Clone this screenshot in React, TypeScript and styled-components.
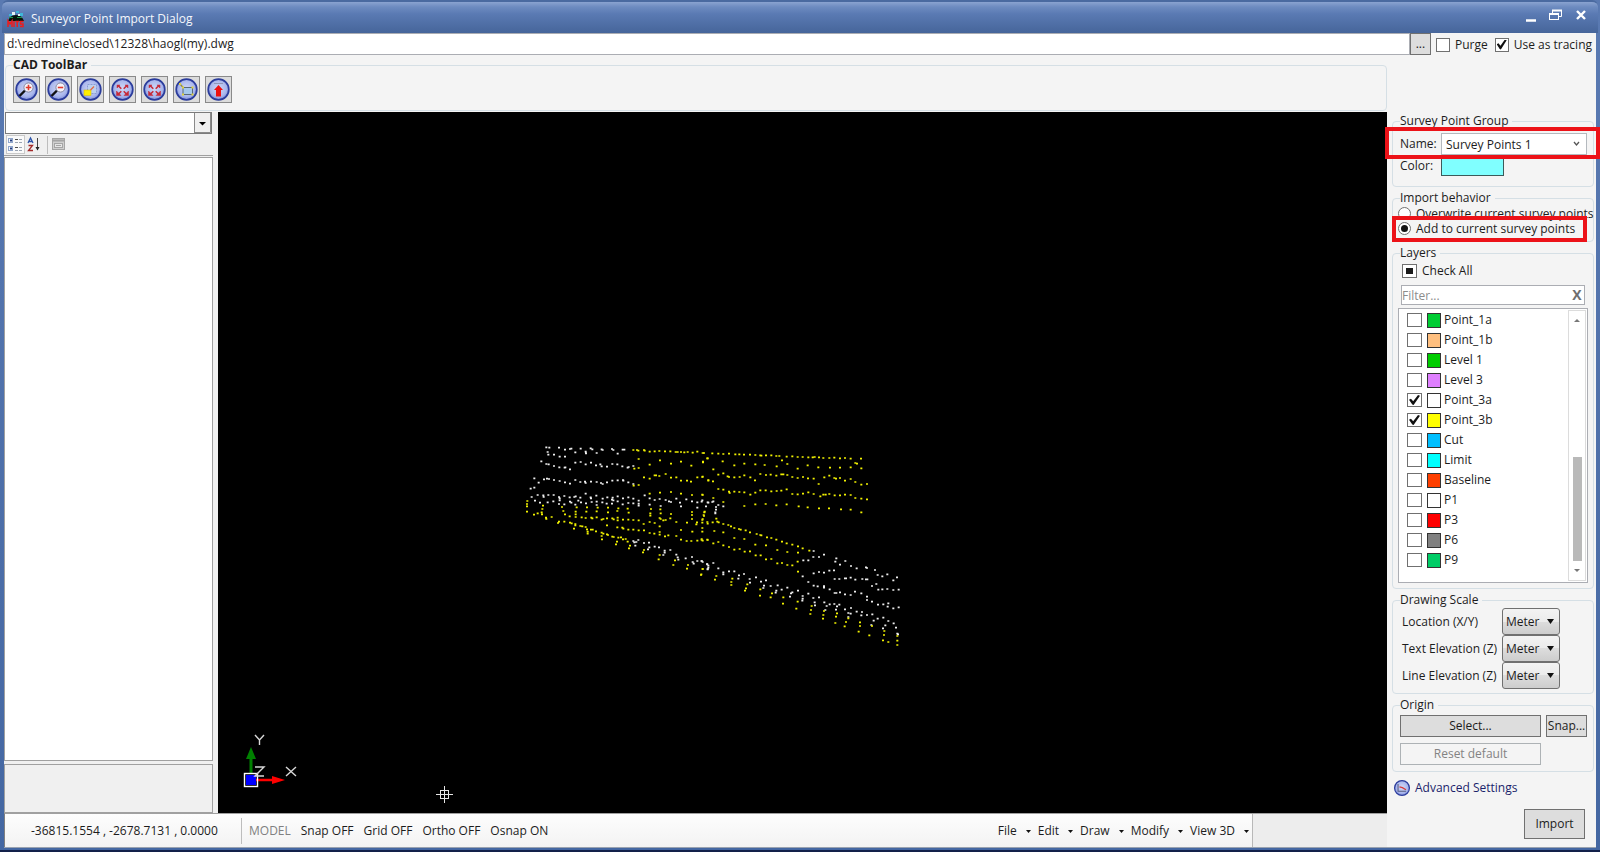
import React, { useEffect, useRef } from "react";
import styled, { createGlobalStyle, css } from "styled-components";

const font = '"Open Sans", "Noto Sans", sans-serif';

const GlobalStyle = createGlobalStyle`
  *, *::before, *::after { box-sizing: border-box; }
  body { margin: 0; font-family: ${font}; font-size: 12px; line-height: 16px; color: #1c1c1c; }
  button, input, select { font: inherit; color: inherit; margin: 0; }
`;

/* ---------- window frame ---------- */

const Window = styled.div`
  display: flex;
  flex-direction: column;
  min-height: 100vh;
  padding: 0 4px 4px;
  background: linear-gradient(to top, #12204a 2px, #4467a2 2px, #5a7ab2 100%);
`;

const TitleBar = styled.header`
  display: flex;
  align-items: center;
  gap: 6px;
  height: 33px;
  margin: 0 -2px;
  padding: 2px 8px 0 5px;
  border-top: 2px solid #4a6aa0;
  border-radius: 6px 6px 0 0;
  background: linear-gradient(#8aa3d0 0, #6d8bc0 5px, #5a7ab3 12px, #46659a 100%);
  color: #f4f7fc;
`;

const Title = styled.h1`
  flex: 1;
  margin: 0;
  font-size: 12px;
  font-weight: 400;
  line-height: 16px;
`;

const CaptionButton = styled.button`
  display: flex;
  width: 19px;
  height: 20px;
  padding: 0;
  border: 0;
  background: none;
  justify-content: center;
  align-items: flex-start;
`;

const Body = styled.main`
  flex: 1;
  display: flex;
  flex-direction: column;
  background: #f4f4f4;
  border-bottom: 1px solid #9aa3b0;
`;

/* ---------- shared controls ---------- */

const PushButton = styled.button<{ $w?: number; $h?: number }>`
  ${(p) => (p.$w ? `width: ${p.$w}px;` : "")}
  height: ${(p) => p.$h ?? 22}px;
  padding: 0;
  border: 1px solid #707070;
  background: #dddddd;
  white-space: nowrap;
  &:disabled {
    border-color: #adb2b5;
    background: #f4f4f4;
    color: #838383;
  }
`;

const CheckInput = styled.input.attrs({ type: "checkbox" })`
  appearance: none;
  position: relative;
  flex: none;
  width: 14px;
  height: 14px;
  border: 1px solid #707070;
  background: #fff;
  &:checked::after {
    content: "";
    position: absolute;
    inset: 1px;
    background: #111;
    clip-path: polygon(0 48%, 18% 38%, 38% 62%, 82% 0, 100% 8%, 42% 100%, 30% 96%);
  }
  &:indeterminate::after {
    content: "";
    position: absolute;
    inset: 3px;
    background: #1a1a1a;
  }
`;

const RadioInput = styled.input.attrs({ type: "radio" })`
  appearance: none;
  display: grid;
  place-items: center;
  flex: none;
  width: 13px;
  height: 13px;
  border: 1px solid #707070;
  border-radius: 50%;
  background: #fff;
  &:checked::after {
    content: "";
    width: 7px;
    height: 7px;
    border-radius: 50%;
    background: #111;
  }
`;

const CheckLabel = styled.label`
  display: flex;
  align-items: center;
  gap: 5px;
  white-space: nowrap;
`;

const SelectBox = styled.span`
  display: grid;
  align-items: center;
  > * { grid-area: 1 / 1; }
  > svg { justify-self: end; pointer-events: none; }
`;

const Group = styled.fieldset`
  min-width: 0;
  margin: 0;
  padding: 0 6px 0 7px;
  border: 1px solid #d5dfe5;
  border-radius: 4px;
`;

const Legend = styled.legend<{ $bold?: boolean }>`
  padding: 0 4px 0 0;
  font-weight: ${(p) => (p.$bold ? 700 : 400)};
  line-height: 16px;
`;

/* ---------- path row ---------- */

const PathRow = styled.div`
  display: flex;
  align-items: center;
  height: 22px;
  padding-right: 4px;
`;

const PathInput = styled.input`
  flex: 1;
  min-width: 0;
  height: 22px;
  padding: 0 2px 2px;
  border: 1px solid #abadb3;
  background: #fff;
`;

const PathOptions = styled.div`
  display: flex;
  gap: 7px;
  margin-left: 5px;
  padding-top: 1px;
`;

/* ---------- main area ---------- */

const Main = styled.div`
  flex: 1;
  display: flex;
`;

const CadColumn = styled.div`
  flex: 1;
  min-width: 0;
  display: flex;
  flex-direction: column;
`;

const ToolBarGroup = styled(Group)`
  margin: 2px 0 1px 1px;
  padding: 3px 7px 7px;
`;

const ToolRow = styled.div`
  display: flex;
  gap: 5px;
  height: 27px;
`;

const ToolButton = styled.button`
  width: 27px;
  height: 27px;
  padding: 0;
  border: 1px solid #8a8a8a;
  background: #dcdcdc;
  svg { display: block; }
`;

const Split = styled.div`
  flex: 1;
  display: flex;
`;

const PropertyPane = styled.aside`
  width: 214px;
  display: flex;
  flex-direction: column;
  padding-right: 5px;
  background: #f0f0f0;
`;

const ObjectSelect = styled(SelectBox)`
  width: 207px;
  height: 22px;
  margin-left: 1px;
  border: 1px solid #7b7b7b;
  background: #fff;
  select {
    appearance: none;
    width: 100%;
    height: 20px;
    border: 0;
    background: transparent;
  }
`;

const PropertyTools = styled.div`
  display: flex;
  align-items: center;
  height: 22px;
  padding-left: 2px;
  border-bottom: 1px solid #a0a0a0;
`;

const PropertyTool = styled.button<{ $active?: boolean }>`
  width: 19px;
  height: 19px;
  padding: 0;
  border: 1px solid ${(p) => (p.$active ? "#c9c9c9" : "transparent")};
  background: ${(p) => (p.$active ? "#fafafa" : "none")};
  svg { display: block; }
`;

const ToolDivider = styled.span`
  width: 1px;
  height: 18px;
  margin: 0 1px 0 3px;
  background: #bdbdbd;
`;

const PropertyGrid = styled.div`
  flex: 1;
  margin-top: 1px;
  border: 1px solid #a0a0a0;
  background: #fff;
`;

const PropertyHelp = styled.div`
  height: 49px;
  margin-top: 3px;
  border: 1px solid #a0a0a0;
`;

const Viewport = styled.div`
  flex: 1;
  position: relative;
  min-width: 0;
  overflow: hidden;
  background: #000;
  svg { position: absolute; width: 100%; height: 100%; }
`;

/* ---------- status bar ---------- */

const StatusBar = styled.footer`
  display: flex;
  height: 34px;
  border-top: 1px solid #a0a0a0;
  border-left: 1px solid #808080;
  background: #ededed;
`;

const StatusStrip = styled.div`
  flex: 1;
  display: flex;
  align-items: center;
  padding-top: 1px;
  background: linear-gradient(#fdfdfd, #f3f3f3);
  border-right: 1px solid #b8b8b8;
`;

const Coordinates = styled.output`
  width: 237px;
  padding-left: 26px;
  line-height: 26px;
  border-right: 1px solid #bdbdbd;
  white-space: nowrap;
`;

const ModeButton = styled.button<{ $dim?: boolean }>`
  padding: 0;
  border: 0;
  background: none;
  white-space: nowrap;
  ${(p) => p.$dim && css`color: #808080;`}
`;

const Modes = styled.div`
  flex: 1;
  display: flex;
  gap: 10px;
  padding-left: 7px;
`;

const Menus = styled.nav`
  display: flex;
  gap: 7px;
  padding-right: 3px;
`;

const MenuButton = styled(ModeButton)`
  display: flex;
  align-items: center;
  gap: 9px;
`;

const StatusFill = styled.div`
  width: 134px;
`;

/* ---------- side panel ---------- */

const SidePanel = styled.aside`
  width: 209px;
  display: flex;
  flex-direction: column;
  gap: 3px;
  padding: 58px 2px 8px 5px;
`;

const NameGroup = styled(Group)`
  padding-top: 4px;
  padding-bottom: 10px;
`;

const BehaviorGroup = styled(Group)`
  padding-bottom: 5px;
  padding-left: 5px;
  line-height: 15px;
  legend { margin-left: 2px; }
`;

const LayersGroup = styled(Group)`
  flex: 1;
  display: flex;
  flex-direction: column;
  padding-top: 2px;
`;

const ScaleGroup = styled(Group)`
  padding-bottom: 4px;
`;

const FieldRow = styled.div`
  display: flex;
  align-items: center;
  > label { width: 41px; }
`;

const ColorRow = styled(FieldRow)`
  margin-top: 1px;
`;

const NameSelect = styled(SelectBox)`
  flex: 1;
  height: 22px;
  border: 1px solid #b4b9be;
  background: #fff;
  select {
    appearance: none;
    height: 20px;
    padding: 1px 4px 0;
    border: 0;
    background: transparent;
  }
  svg { margin-right: 6px; }
`;

const ColorButton = styled.button`
  width: 63px;
  height: 20px;
  padding: 0;
  border: 1px solid #3c5a5a;
  background: #80ffff;
`;

const Highlighted = styled.div`
  position: relative;
`;

const HighlightFrame = styled.span<{ $inset: string }>`
  position: absolute;
  inset: ${(p) => p.$inset};
  border: 4px solid #ec1218;
  pointer-events: none;
`;

const CheckAllLabel = styled(CheckLabel)`
  padding-left: 2px;
`;

const FilterRow = styled.div`
  display: flex;
  align-items: center;
  height: 20px;
  margin: 6px 2px 3px 1px;
  border: 1px solid #abadb3;
  background: #fff;
  input {
    flex: 1;
    min-width: 0;
    height: 18px;
    padding: 0;
    border: 0;
    background: none;
    &::placeholder { color: #8c8c8c; opacity: 1; }
  }
  button {
    width: 14px;
    padding: 0;
    border: 0;
    background: none;
    color: #6e6e6e;
    font-size: 14px;
    font-weight: 700;
  }
`;

const LayerPanel = styled.div`
  flex: 1;
  display: flex;
  margin: 0 -1px 5px -2px;
  padding: 1px;
  border: 1px solid #abadb3;
  background: #fff;
`;

const LayerList = styled.ul`
  flex: 1;
  margin: 0;
  padding: 0 0 0 7px;
  list-style: none;
`;

const LayerItem = styled.li`
  label {
    display: flex;
    align-items: center;
    height: 20px;
  }
`;

const LayerCheck = styled(CheckInput)`
  width: 15px;
`;

const Swatch = styled.span<{ $color: string }>`
  width: 14px;
  height: 15px;
  margin: 0 3px 0 5px;
  border: 1px solid #333;
  background: ${(p) => p.$color};
`;

const ScrollTrack = styled.div`
  display: flex;
  flex-direction: column;
  align-items: center;
  width: 18px;
  padding: 8px 0;
  border: 1px solid #dcdcdc;
`;

const ScrollThumb = styled.div`
  width: 9px;
  height: 104px;
  margin: auto 0 8px;
  background: #b9b9b9;
`;

const ScaleRow = styled.div`
  display: flex;
  align-items: center;
  height: 27px;
  padding-left: 2px;
  label { width: 100px; white-space: nowrap; }
`;

const UnitSelect = styled(SelectBox)`
  width: 58px;
  height: 27px;
  border: 1px solid #707070;
  border-radius: 3px;
  background: linear-gradient(#f3f3f3, #ebebeb 50%, #dddddd 50%, #cdcdcd);
  select {
    appearance: none;
    height: 25px;
    padding: 0 3px;
    border: 0;
    background: transparent;
  }
  svg { margin-right: 5px; }
`;

const OriginGrid = styled.div`
  display: grid;
  grid-template-columns: 1fr 41px;
  gap: 6px 5px;
  padding: 2px 0 6px;
`;

const AdvancedLink = styled.a`
  display: flex;
  align-items: center;
  gap: 4px;
  margin: 4px 0 0 1px;
  color: #1b1f6b;
  text-decoration: none;
  svg { flex: none; }
`;

const ImportRow = styled.div`
  display: flex;
  justify-content: flex-end;
  padding: 9px 9px 0 0;
`;

/* ---------- drawings ---------- */

const Caret = ({ w = 8, h = 5, color = "#111" }: { w?: number; h?: number; color?: string }) => (
  <svg width={w} height={h} aria-hidden="true">
    <path d={`M0 0H${w}L${w / 2} ${h}Z`} fill={color} />
  </svg>
);

const Orb = ({ size = 25, children }: { size?: number; children: React.ReactNode }) => (
  <svg width={size} height={size} viewBox="0 0 25 25" aria-hidden="true">
    <defs>
      <radialGradient id="orb" cx="50%" cy="45%" r="55%">
        <stop offset="0" stopColor="#d0d8f6" />
        <stop offset="0.7" stopColor="#aab7ec" />
        <stop offset="1" stopColor="#7d8cd8" />
      </radialGradient>
    </defs>
    <circle cx="12.5" cy="12.5" r="10.3" fill="url(#orb)" stroke="#2b3c9c" strokeWidth="1.7" />
    {children}
  </svg>
);

const Magnifier = ({ plus }: { plus?: boolean }) => (
  <g>
    <path d="M5.500 19L11 13.500" stroke="#111" strokeWidth="2.4" />
    <circle cx="14.5" cy="10.5" r="4.6" fill="#f6f3fa" stroke="#8385a0" />
    <path d={plus ? "M11.8 10.5H17.2M14.5 7.8V13.2" : "M11.8 10.5H17.2"} stroke="#e03a2c" strokeWidth="1.6" />
  </g>
);

const Expand = () => (
  <g stroke="#c62a38" fill="#c62a38">
    <path d="M8 8.5L11.300 11.700M17 8.5L13.700 11.700M8 17.500L11.300 14.300M17 17.500L13.700 14.300" strokeWidth="1.6" />
    <path d="M7 8h3L7 11zM18 8h-3L18 11z" strokeWidth="0.5" />
    <path d="M6.500 18.500h4.500L6.500 14zM18.500 18.500h-4.500L18.500 14z" strokeWidth="0.5" />
  </g>
);

const tools: { label: string; icon: React.ReactNode }[] = [
  { label: "Zoom in", icon: <Magnifier plus /> },
  { label: "Zoom out", icon: <Magnifier /> },
  {
    label: "Zoom window",
    icon: (
      <g>
        <rect x="9.5" y="7.5" width="9" height="9" fill="#bcd0ee" stroke="#8a9bd4" strokeDasharray="2 1" />
        <rect x="6" y="13" width="7" height="5.5" fill="#ffee00" stroke="#d8b800" strokeWidth="0.5" />
        <path d="M12.5 13L16 9.500" stroke="#e8663c" strokeWidth="1.2" />
      </g>
    ),
  },
  { label: "Zoom extents", icon: <Expand /> },
  { label: "Zoom all", icon: <Expand /> },
  {
    label: "Pan",
    icon: (
      <g>
        <path d="M6 7L10 11.500" stroke="#8d8a3c" strokeWidth="1.2" />
        <rect x="9" y="10.5" width="9.5" height="7" fill="#a6c9ec" stroke="#5a6a78" />
        <path d="M5 6h2v2H5zM8 9.5h2v2H8zM17.5 9.5h2v2h-2zM8 16.5h2v2H8zM17.5 16.5h2v2h-2z" fill="#e0d43c" />
      </g>
    ),
  },
  {
    label: "Export",
    icon: (
      <g>
        <path d="M8 6.5H17" stroke="#8f98b8" />
        <path d="M12.5 8L17 13H15V19.5H10V13H8Z" fill="#ee1111" />
      </g>
    ),
  },
];

const layers: { name: string; color: string; checked?: boolean }[] = [
  { name: "Point_1a", color: "#00cc33" },
  { name: "Point_1b", color: "#ffbf7f" },
  { name: "Level 1", color: "#00cc00" },
  { name: "Level 3", color: "#df7fff" },
  { name: "Point_3a", color: "#ffffff", checked: true },
  { name: "Point_3b", color: "#ffff00", checked: true },
  { name: "Cut", color: "#00bfff" },
  { name: "Limit", color: "#00ffff" },
  { name: "Baseline", color: "#ff3f00" },
  { name: "P1", color: "#ffffff" },
  { name: "P3", color: "#ff0000" },
  { name: "P6", color: "#808080" },
  { name: "P9", color: "#00cc66" },
];

/* Survey points in drawing units, "x,y" pairs, west and east halves of the site. */
const whiteWest =
  "94,37 103,38 98,51 100,59 117,59 134,65 150,65 132,38 150,44 165,42 169,41 181,52 197,41 212,50 213,55 227,40 232,43 245,54 260,43 263,45 291,42 295,45 308,56 323,44 328,44 79,79 94,87 101,88 117,93 133,97 149,98 151,97 165,103 181,83 197,81 212,88 228,83 243,91 256,88 260,94 276,95 292,87 307,88 322,94 338,98 341,96 355,93 58,130 71,143 87,133 96,131 102,132 117,135 134,138 150,142 165,146 181,135 196,141 210,140 212,144 228,140 245,141 258,144 263,147 276,142 292,137 308,136 324,135 325,137 340,142 355,147 47,161 58,158 50,186 68,180 85,181 86,186 100,180 116,180 132,186 134,190 134,196 132,207 148,183 164,187 178,186 182,184 196,188 212,176 227,187 228,190 244,182 263,191 277,187 293,188 308,184 291,194 295,196 324,190 340,187 355,191 371,197 371,206 371,212 389,181 404,190 419,195 434,192 437,213 452,195 462,199 468,201 484,191 495,203 498,214 514,193 531,199 547,202 560,200 578,202 592,201 547,218 60,197 75,203 98,202 115,199 148,208 165,200 169,203 181,209 190,197 198,202 213,205 230,201 245,200 245,210 262,202 275,206 291,206 308,199 323,208 340,204 355,205 404,209 355,318 358,322 364,321 370,315 361,332 387,324 402,323 403,337 399,343 419,335 432,337 449,347 449,353 445,360 466,345 484,359 488,367 490,374 512,370 531,366 533,381 536,386 547,378 560,378 563,381 576,387 580,392 578,402";
const whiteEast =
  "7,196 25,203 18,214 40,199 55,210 70,214 48,216 48,224 46,232 46,235 5,378 22,388 25,398 40,384 23,403 55,400 70,412 70,418 87,409 103,409 117,421 115,431 132,417 149,432 150,443 168,427 183,440 192,452 190,459 198,436 212,453 229,467 227,473 233,451 245,464 262,458 273,475 270,485 277,472 294,467 308,483 308,491 307,497 325,476 340,489 344,502 345,511 357,487 373,502 380,513 376,525 389,508 403,507 411,514 408,524 418,509 435,523 445,534 445,546 453,519 452,536 470,530 486,531 484,541 501,540 517,538 521,557 514,570 533,551 550,548 556,571 549,580 565,558 581,565 588,578 592,596 594,598 341,348 340,366 357,366 372,359 409,370 406,380 325,376 310,376 420,389 436,378 453,393 470,400 498,397 501,399 525,405 533,420 547,424 562,418 580,436 591,427 308,424 341,415 357,411 372,413 388,407 402,406 325,441 341,452 353,454 372,453 372,458 389,463 404,432 418,432 435,430 438,430 452,428 466,434 487,432 498,433 502,433 516,453 529,447 535,464 547,463 562,462 580,465 596,464 404,474 409,474 420,472 435,478 452,480 465,470 484,475 501,485 501,495 516,500 534,509 550,508 565,505 563,515 580,520 596,517";
const yellowWest =
  "355,45 366,45 370,47 387,45 389,47 404,50 419,49 433,48 450,49 466,49 482,51 488,51 498,51 508,52 518,51 533,53 547,50 563,54 371,72 435,76 498,80 468,86 404,89 529,92 578,70 564,82 371,99 358,101 371,150 356,152 387,127 404,131 419,121 423,121 433,123 452,117 468,128 484,127 498,137 516,137 528,140 547,127 563,125 580,135 468,171 435,173 404,176 498,176 531,180 563,180 37,198 36,207 36,214 36,230 84,212 82,222 80,232 81,238 57,239 68,235 93,248 94,252 110,246 141,216 145,228 150,238 164,244 148,260 132,260 129,264 165,263 170,265 185,217 182,230 182,238 182,246 181,267 216,217 214,230 200,247 212,249 229,248 232,250 248,218 245,229 245,247 260,254 265,252 279,218 279,232 276,250 292,250 296,253 310,220 307,228 308,248 308,256 338,221 341,233 324,254 340,254 355,255 371,256 181,271 177,281 196,273 202,274 212,276 216,283 218,290 218,296 228,284 233,284 243,289 260,293 265,296 260,303 261,313 276,298 279,300 292,305 296,306 276,271 307,277 310,308 306,320 303,328 318,307 324,313 332,312 338,320 345,332 342,340 322,278 325,281 340,284 355,284 371,286 387,286 386,267 404,261 404,294 418,296 434,274 434,291 434,299 419,264 434,249 437,252 445,256 452,255 408,222 406,235 406,242 436,223 437,235 468,237 466,250 484,261 484,303 498,285 498,314 515,318 450,304 460,301 531,231 531,240 531,252 516,263 546,262 544,268 562,263 578,266 569,230 566,240 563,252 532,290 562,290 529,318 547,317 560,315 563,317 578,315 387,345 384,352 434,360 431,373 480,376 475,390 519,390 516,401 563,402 559,418";
const yellowEast =
  "12,54 37,55 55,56 70,57 87,56 106,58 118,58 132,59 150,59 166,60 181,61 184,62 198,61 214,61 229,63 238,63 260,65 277,64 293,66 308,66 325,67 338,67 344,66 357,67 370,69 388,69 403,68 420,70 435,69 452,71 483,71 22,70 9,80 68,79 103,91 133,86 166,88 194,90 230,94 262,87 246,76 293,101 323,91 355,97 390,98 420,98 452,97 466,84 471,86 484,100 40,103 70,115 7,126 25,137 39,139 55,119 83,124 87,126 103,127 119,126 133,121 151,127 165,136 181,117 198,120 212,119 229,122 244,118 250,118 262,120 277,126 293,129 309,126 324,130 341,131 373,127 388,122 403,129 408,131 420,129 435,137 452,132 466,141 484,149 501,147 356,147 55,162 70,164 87,170 89,174 103,170 118,171 133,172 151,179 166,173 181,166 197,166 214,169 230,168 244,167 260,163 277,177 293,178 309,176 325,172 341,177 361,184 370,179 377,179 388,177 404,181 420,181 435,179 452,180 466,189 484,191 501,193 7,179 40,189 70,201 133,213 166,208 197,207 229,211 260,208 296,214 323,217 357,220 387,220 423,223 452,224 484,232 13,232 12,243 49,251 7,255 22,261 38,262 52,260 56,262 70,267 85,270 93,274 103,279 117,282 122,284 137,286 150,292 170,297 181,300 184,301 201,307 214,309 229,314 246,320 260,325 277,329 294,334 308,340 328,347 7,279 43,288 70,292 103,309 133,312 166,329 198,331 232,345 262,351 294,353 5,312 22,314 40,325 55,321 70,331 87,336 103,344 119,342 134,350 150,349 167,361 182,361 198,373 214,372 232,385 246,384 262,390 277,391 293,380 294,410 8,402 3,420 49,423 45,434 97,431 94,441 94,450 142,448 138,460 135,467 181,463 180,482 216,475 212,487 250,487 249,506 293,500 289,521 335,513 333,525 331,537 372,528 370,540 369,551 411,535 408,545 406,564 445,550 438,561 434,574 480,562 480,573 476,590 516,573 508,601 553,588 552,600 549,616 565,621 592,603 592,617 592,630";

const dots = (list: string) =>
  list
    .split(" ")
    .map((pair) => {
      const [x, y] = pair.split(",").map(Number);
      return `M${x - 3} ${y}h6`;
    })
    .join("");

const Drawing = () => (
  <svg role="img" aria-label="Survey points">
    <g transform="translate(297 323) scale(0.33333)" strokeWidth="5" fill="none">
      <path d={dots(whiteWest)} stroke="#eeeeee" />
      <path d={dots(yellowWest)} stroke="#f2f200" />
      <g transform="translate(555 0)">
        <path d={dots(whiteEast)} stroke="#eeeeee" />
        <path d={dots(yellowEast)} stroke="#f2f200" />
      </g>
    </g>
    <g fill="none" strokeWidth="1.4">
      <path d="M33 662V644" stroke="#008000" strokeWidth="3" />
      <path d="M33 635L38 647H28Z" fill="#008000" />
      <path d="M38 668H56" stroke="#f00" strokeWidth="2.5" />
      <path d="M67 668L54 664V672Z" fill="#f00" />
      <rect x="26.5" y="661.500" width="13" height="13" stroke="#fff" />
      <rect x="28" y="663" width="10" height="10" fill="#00f" />
      <path d="M37 623L41.500 628L46 623M41.500 628V633" stroke="#d8d8d8" />
      <path d="M37 655H46L37 664H46" stroke="#d8d8d8" />
      <path d="M68 655L78 664M78 655L68 664" stroke="#d8d8d8" />
    </g>
    <g fill="none" stroke="#e6e6e6">
      <path d="M218 682.500H235M226.500 674V691" />
      <rect x="222.500" y="678.500" width="8" height="8" />
    </g>
  </svg>
);

const AppLogo = () => (
  <svg width="18" height="18" viewBox="0 0 18 18" aria-hidden="true">
    <path d="M1 11Q3 5 9 5T17 11Z" fill="#06150c" />
    <path d="M2 4h3v2H2zM9 1h3v2H9zM13 3h3v3h-3z" fill="#3fb6d8" />
    <path d="M5 2h3v3H5zM11 4h2v2h-2z" fill="#e8f4f4" />
    <path d="M2 7h4v1H2zM10 7h5v1h-5z" fill="#1a9a4a" />
    <path d="M1 17V11L3 14L5 11V17M7 11V17M8.500 11.500H12M10.200 11V17M16.500 11.500H13.500V14H16V16.500H13" stroke="#ee1c1c" strokeWidth="1.500" fill="none" />
  </svg>
);

/* ---------- page ---------- */

export default function App() {
  const checkAll = useRef<HTMLInputElement>(null);
  useEffect(() => {
    if (checkAll.current) checkAll.current.indeterminate = true;
  }, []);

  return (
    <>
      <GlobalStyle />
      <Window>
        <TitleBar>
          <AppLogo />
          <Title>Surveyor Point Import Dialog</Title>
          <CaptionButton aria-label="Minimize">
            <svg width="12" height="14"><path d="M1 11.500H11" stroke="#fff" strokeWidth="2.500" /></svg>
          </CaptionButton>
          <CaptionButton aria-label="Restore">
            <svg width="13" height="12" fill="none" stroke="#fff">
              <path d="M3.500 4V1.500H12.500V7.500H10" /><path d="M3 1.500H13" strokeWidth="2" />
              <rect x="0.500" y="4.500" width="9" height="6" /><path d="M0 5H10" strokeWidth="2" />
            </svg>
          </CaptionButton>
          <CaptionButton aria-label="Close">
            <svg width="12" height="12"><path d="M2 2L10 10M10 2L2 10" stroke="#fff" strokeWidth="2.400" /></svg>
          </CaptionButton>
        </TitleBar>

        <Body>
          <PathRow>
            <PathInput aria-label="Drawing file" defaultValue="d:\redmine\closed\12328\haogl(my).dwg" />
            <PushButton $w={21} aria-label="Browse">...</PushButton>
            <PathOptions>
              <CheckLabel><CheckInput />Purge</CheckLabel>
              <CheckLabel><CheckInput defaultChecked />Use as tracing</CheckLabel>
            </PathOptions>
          </PathRow>

          <Main>
            <CadColumn>
              <ToolBarGroup>
                <Legend $bold>CAD ToolBar</Legend>
                <ToolRow>
                  {tools.map((t) => (
                    <ToolButton key={t.label} aria-label={t.label}><Orb>{t.icon}</Orb></ToolButton>
                  ))}
                </ToolRow>
              </ToolBarGroup>

              <Split>
                <PropertyPane>
                  <ObjectSelect>
                    <select aria-label="Object"><option></option></select>
                    <svg width="17" height="20" aria-hidden="true">
                      <rect width="17" height="20" fill="#f0f0f0" />
                      <path d="M0.500 0V20M16.500 0V19.500H0" stroke="#8a8a8a" fill="none" />
                      <path d="M5 9H12L8.500 12.500Z" fill="#000" />
                    </svg>
                  </ObjectSelect>
                  <PropertyTools>
                    <PropertyTool $active aria-label="Categorized">
                      <svg width="17" height="17" fill="none">
                        <rect x="1.500" y="2.500" width="4" height="4" stroke="#8fa6cc" />
                        <rect x="1.500" y="10.500" width="4" height="4" stroke="#8fa6cc" />
                        <path d="M3 4.500h2M3 12.500h2" stroke="#203c80" strokeWidth="2" />
                        <path d="M8 3.500h3M8 11.500h3" stroke="#4a4a4a" />
                        <path d="M12 3.500h3M8 6.500h3M12 6.500h3M12 11.500h3M8 14.500h3M12 14.500h3" stroke="#9aa4b2" />
                      </svg>
                    </PropertyTool>
                    <PropertyTool aria-label="Alphabetical">
                      <svg width="17" height="17" fill="none">
                        <path d="M2 7L4.500 2L7 7M3 5.500H6" stroke="#2a52a8" strokeWidth="1.300" />
                        <path d="M2.500 9.500H6.500L2.500 14.500H7" stroke="#a32a2a" strokeWidth="1.300" />
                        <path d="M11.500 2V14" stroke="#444" /><path d="M9.500 11H13.500L11.500 14.500Z" fill="#222" />
                      </svg>
                    </PropertyTool>
                    <ToolDivider />
                    <PropertyTool aria-label="Property pages" disabled>
                      <svg width="17" height="17" fill="none" stroke="#a5a5a5">
                        <rect x="2.500" y="2.500" width="12" height="11" fill="#d0d0d0" />
                        <path d="M3 4.500H14" strokeWidth="2" />
                        <rect x="4.500" y="7.500" width="8" height="4" fill="#e6e6e6" /><path d="M6 9.500h5" />
                      </svg>
                    </PropertyTool>
                  </PropertyTools>
                  <PropertyGrid />
                  <PropertyHelp />
                </PropertyPane>
                <Viewport><Drawing /></Viewport>
              </Split>

              <StatusBar>
                <StatusStrip>
                  <Coordinates>-36815.1554 , -2678.7131 , 0.0000</Coordinates>
                  <Modes>
                    <ModeButton $dim>MODEL</ModeButton>
                    <ModeButton>Snap OFF</ModeButton>
                    <ModeButton>Grid OFF</ModeButton>
                    <ModeButton>Ortho OFF</ModeButton>
                    <ModeButton>Osnap ON</ModeButton>
                  </Modes>
                  <Menus>
                    {["File", "Edit", "Draw", "Modify", "View 3D"].map((m) => (
                      <MenuButton key={m}>{m}<Caret w={5} h={3} /></MenuButton>
                    ))}
                  </Menus>
                </StatusStrip>
                <StatusFill />
              </StatusBar>
            </CadColumn>

            <SidePanel>
              <NameGroup>
                <Legend>Survey Point Group</Legend>
                <Highlighted>
                  <FieldRow>
                    <label htmlFor="group-name">Name:</label>
                    <NameSelect>
                      <select id="group-name"><option>Survey Points 1</option></select>
                      <svg width="7" height="6" fill="none"><path d="M1 1L3.500 4L6 1" stroke="#555" strokeWidth="1.300" /></svg>
                    </NameSelect>
                  </FieldRow>
                  <HighlightFrame $inset="-6px -13px -4px -15px" />
                </Highlighted>
                <ColorRow>
                  <label htmlFor="group-color">Color:</label>
                  <ColorButton id="group-color" aria-label="Color" />
                </ColorRow>
              </NameGroup>

              <BehaviorGroup>
                <Legend>Import behavior</Legend>
                <CheckLabel><RadioInput name="behavior" />Overwrite current survey points</CheckLabel>
                <Highlighted>
                  <CheckLabel><RadioInput name="behavior" defaultChecked />Add to current survey points</CheckLabel>
                  <HighlightFrame $inset="-5px 0 -6px -6px" />
                </Highlighted>
              </BehaviorGroup>

              <LayersGroup>
                <Legend>Layers</Legend>
                <CheckAllLabel><LayerCheck ref={checkAll} />Check All</CheckAllLabel>
                <FilterRow>
                  <input aria-label="Filter layers" placeholder="Filter..." />
                  <button aria-label="Clear filter">X</button>
                </FilterRow>
                <LayerPanel>
                  <LayerList>
                    {layers.map((l) => (
                      <LayerItem key={l.name}>
                        <label>
                          <LayerCheck defaultChecked={l.checked} />
                          <Swatch $color={l.color} />
                          {l.name}
                        </label>
                      </LayerItem>
                    ))}
                  </LayerList>
                  <ScrollTrack>
                    <svg width="6" height="3"><path d="M0 3H6L3 0Z" fill="#777" /></svg>
                    <ScrollThumb />
                    <Caret w={6} h={3} color="#777" />
                  </ScrollTrack>
                </LayerPanel>
              </LayersGroup>

              <ScaleGroup>
                <Legend>Drawing Scale</Legend>
                {["Location (X/Y)", "Text Elevation (Z)", "Line Elevation (Z)"].map((name, i) => (
                  <ScaleRow key={name}>
                    <label htmlFor={`scale-${i}`}>{name}</label>
                    <UnitSelect>
                      <select id={`scale-${i}`}><option>Meter</option></select>
                      <Caret w={7} h={5} />
                    </UnitSelect>
                  </ScaleRow>
                ))}
              </ScaleGroup>

              <Group>
                <Legend>Origin</Legend>
                <OriginGrid>
                  <PushButton>Select...</PushButton>
                  <PushButton>Snap...</PushButton>
                  <PushButton disabled>Reset default</PushButton>
                </OriginGrid>
              </Group>

              <AdvancedLink href="#advanced">
                <Orb size={18}>
                  <path d="M7 7V17H18" stroke="#555b80" strokeWidth="1.400" fill="none" />
                  <path d="M9 11L13 12L18 15" stroke="#d83a3a" strokeWidth="1.800" fill="none" />
                </Orb>
                Advanced Settings
              </AdvancedLink>
              <ImportRow><PushButton $w={61} $h={30}>Import</PushButton></ImportRow>
            </SidePanel>
          </Main>
        </Body>
      </Window>
    </>
  );
}
